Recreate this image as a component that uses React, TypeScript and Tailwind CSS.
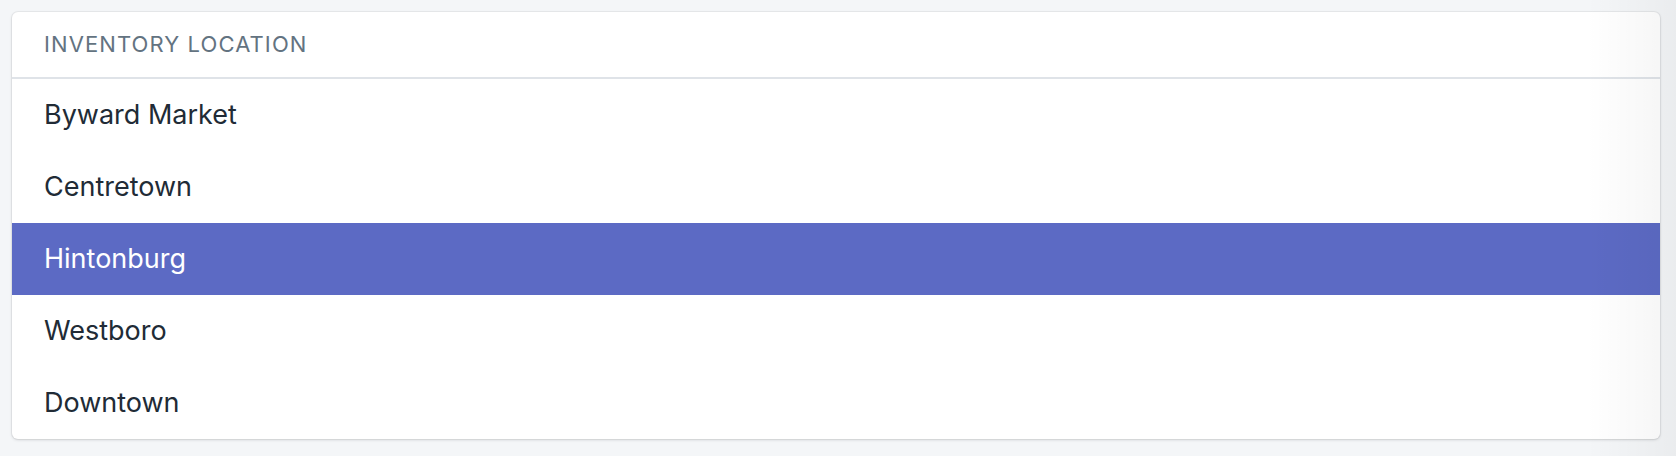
import React from 'react';

const locations = ['Byward Market', 'Centretown', 'Hintonburg', 'Westboro', 'Downtown'];

const App: React.FC = () => {
  const selected = 'Hintonburg';

  return (
    <div className="relative min-h-[456px] w-full bg-[#f4f6f8] pt-[12px] pl-[12px] pr-[16px] pb-[17px] font-['Inter','Noto_Sans',sans-serif]">
      {/* Location list card */}
      <div className="overflow-hidden rounded-[6px] bg-white shadow-[0_0_0_1px_rgba(63,63,68,0.06),0_1px_3px_0_rgba(63,63,68,0.18)]">
        <div className="flex h-[67px] items-center border-b-2 border-[#dfe3e8] pl-8">
          <span className="text-[22px] uppercase tracking-[0.05em] text-[#637381]">Inventory location</span>
        </div>
        <ul>
          {locations.map((loc) => (
            <li
              key={loc}
              className={
                loc === selected
                  ? 'flex h-[72px] items-center bg-[#5c6ac4] pl-8 text-[27px] text-white'
                  : 'flex h-[72px] items-center pl-8 text-[27px] text-[#212b36]'
              }
            >
              {loc}
            </li>
          ))}
        </ul>
      </div>

      {/* right edge fade */}
      <div className="pointer-events-none absolute inset-y-0 right-0 w-[90px] bg-gradient-to-r from-transparent to-black/[0.04]" />
    </div>
  );
};

export default App;
